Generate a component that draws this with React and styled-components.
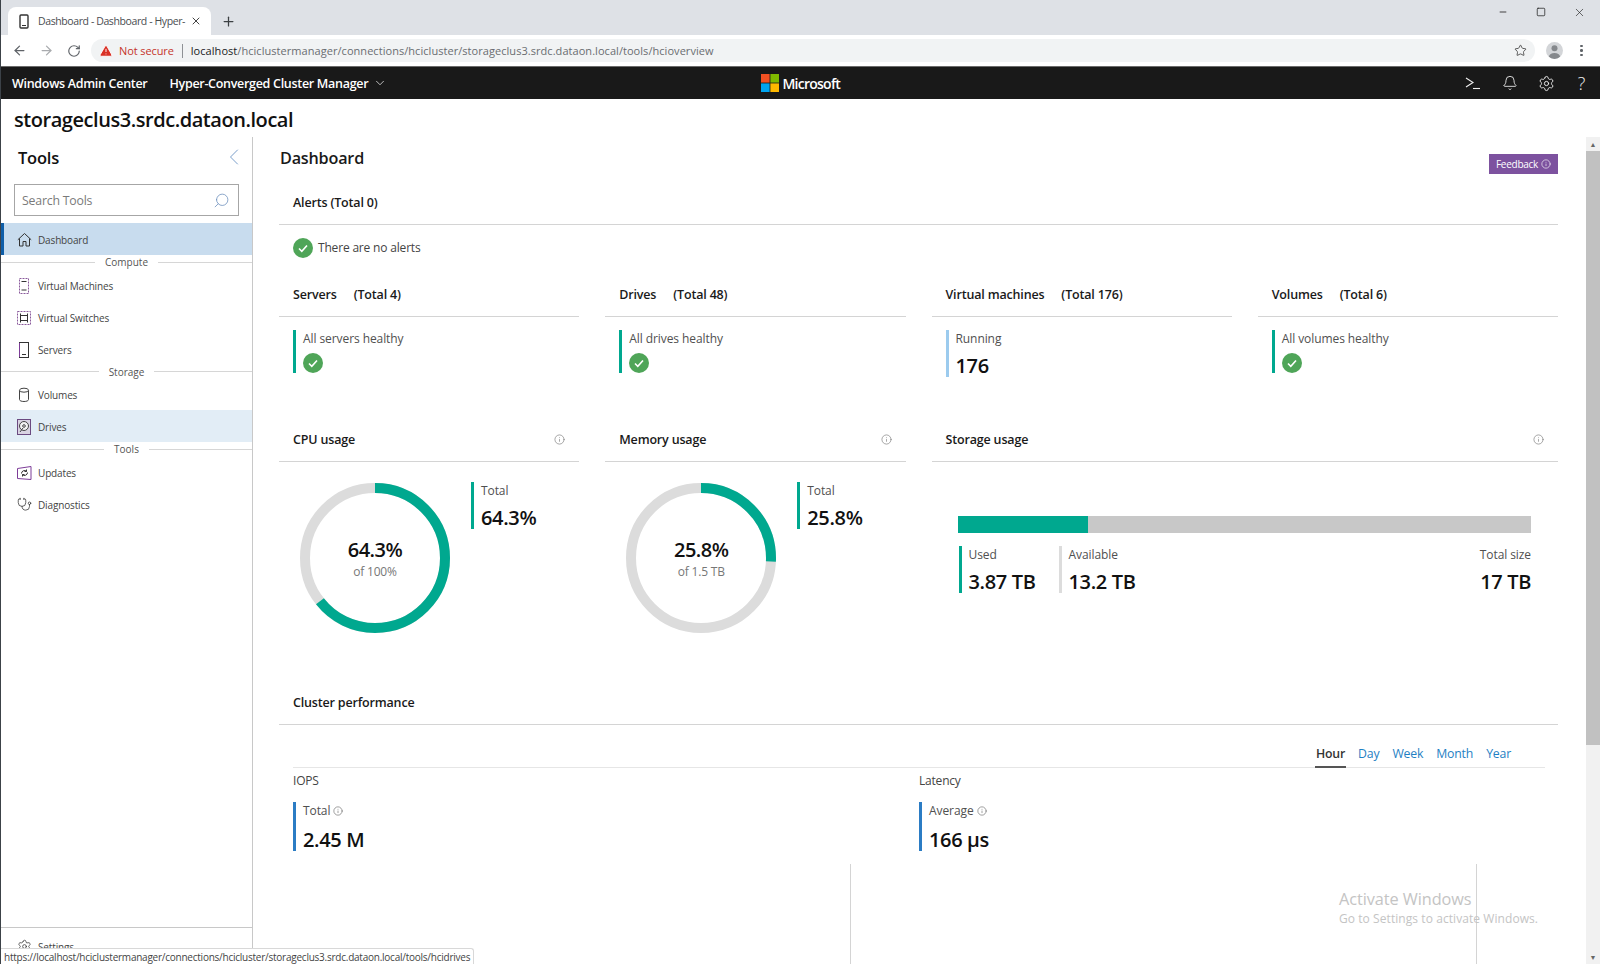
import React from 'react';
import styled, { createGlobalStyle } from 'styled-components';
import {
  ArrowLeft, ArrowRight, RotateCw, Star, Plus, X, Minus, Square, ChevronDown, ChevronLeft,
  Search, Info, Bell, Settings, Stethoscope, TriangleAlert,
} from 'lucide-react';

const Global = createGlobalStyle`
  html, body { margin: 0; padding: 0; height: 964px; overflow: hidden; background: #fff; }
  body { font-family: "Open Sans", "Noto Sans", "Liberation Sans", sans-serif; color: #1a1a1a; }
  * { box-sizing: border-box; }
`;

const Page = styled.div`
  position: relative;
  width: 1600px;
  height: 964px;
  display: flex;
  flex-direction: column;
  overflow: hidden;
  border-left: 1px solid #3c4248;
`;

/* browser chrome */
const TabStrip = styled.div`
  height: 35px;
  flex: none;
  background: #dee1e6;
  display: flex;
  align-items: flex-end;
  padding-left: 7px;
`;
const Tab = styled.div`
  width: 203px;
  height: 28px;
  background: #fff;
  border-radius: 8px 8px 0 0;
  display: flex;
  align-items: center;
  padding-left: 11px;
  font-size: 10.5px;
  letter-spacing: -0.4px;
  color: #4a4d51;
  svg { flex: none; }
`;
const TabTitle = styled.span`
  margin-left: 9px;
  width: 152px;
  white-space: nowrap;
`;
const NewTab = styled.div`
  height: 28px;
  margin-left: 10px;
  display: flex;
  align-items: center;
  color: #3c4043;
`;
const WindowControls = styled.div`
  margin-left: auto;
  height: 35px;
  display: flex;
  align-items: flex-start;
  padding: 5px 2px 0 0;
  color: #222;
`;
const WindowButton = styled.div`
  width: 38px;
  height: 14px;
  display: flex;
  justify-content: center;
  align-items: center;
`;
const Toolbar = styled.div`
  height: 31px;
  flex: none;
  background: #fff;
  display: flex;
  align-items: center;
  padding-left: 5px;
  color: #5f6368;
`;
const NavButton = styled.div`
  width: 27px;
  display: flex;
  justify-content: center;
  color: ${p => (p.$off ? '#a9abae' : '#5f6368')};
`;
const Omnibox = styled.div`
  margin-left: 4px;
  width: 1444px;
  height: 23px;
  background: #f1f3f4;
  border-radius: 12px;
  display: flex;
  align-items: center;
  padding: 0 8px 0 8px;
  font-size: 11px;
  letter-spacing: 0.05px;
  white-space: nowrap;
`;
const NotSecure = styled.span`
  color: #c5352b;
  margin-left: 6px;
  letter-spacing: -0.1px;
`;
const OmniSep = styled.span`
  width: 1px;
  height: 14px;
  background: #8e9195;
  margin: 0 8px 0 8px;
`;
const UrlHost = styled.span`color: #202124;`;
const UrlRest = styled.span`color: #6a6d71;`;
const Bookmark = styled.span`
  margin-left: auto;
  display: flex;
  color: #444;
`;
const Avatar = styled.div`
  margin-left: 11px;
  width: 17px;
  height: 17px;
  border-radius: 50%;
  background: #d3d5d8;
  color: #85888c;
  overflow: hidden;
  display: flex;
  justify-content: center;
`;
const DotsMenu = styled.div`
  margin-left: 17px;
  display: flex;
  flex-direction: column;
  gap: 2px;
  span { width: 2.5px; height: 2.5px; border-radius: 50%; background: #5f6368; }
`;

/* app bar */
const AppBar = styled.div`
  height: 33px;
  flex: none;
  background: #191919;
  border-top: 1px solid #6b6b6b;
  color: #fff;
  display: flex;
  align-items: center;
  padding-left: 11px;
  font-size: 12.5px;
  letter-spacing: -0.3px;
`;
const AppName = styled.div`
  font-weight: 600;
`;
const Solution = styled.div`
  margin-left: 22px;
  font-weight: 600;
  display: flex;
  align-items: center;
  gap: 5px;
  width: 592px;
`;
const Brand = styled.div`
  display: flex;
  align-items: center;
  gap: 3px;
  font-size: 14px;
  font-weight: 600;
  letter-spacing: -0.75px;
`;
const BarIcons = styled.div`
  margin-left: auto;
  padding-right: 2px;
  display: flex;
  align-items: center;
  color: #f0f0f0;
`;
const BarIcon = styled.div`
  width: ${p => p.$w || 37}px;
  display: flex;
  justify-content: center;
`;
const Help = styled.span`
  font-size: 18px;
  font-weight: 300;
  line-height: 18px;
`;

const ServerTitle = styled.div`
  height: 38px;
  flex: none;
  padding: 3px 0 0 13px;
  display: flex;
  align-items: center;
  font-size: 20px;
  font-weight: 600;
  letter-spacing: -0.45px;
  color: #111;
`;

const Body = styled.div`
  flex: 1;
  min-height: 0;
  display: flex;
`;

/* sidebar */
const Sidebar = styled.div`
  width: 252px;
  flex: none;
  border-right: 1px solid #c8c8c8;
  display: flex;
  flex-direction: column;
`;
const SideHead = styled.div`
  height: 47px;
  flex: none;
  display: flex;
  align-items: center;
  justify-content: space-between;
  padding: 0 4px 7px 17px;
  font-size: 16.5px;
  font-weight: 600;
  letter-spacing: -0.2px;
  color: #7097c6;
  span { color: #111; }
`;
const SearchBox = styled.div`
  margin-left: 13px;
  width: 225px;
  height: 32px;
  flex: none;
  border: 1px solid #a6a6a6;
  display: flex;
  align-items: center;
  justify-content: space-between;
  padding: 0 8px 0 7px;
  font-size: 12.3px;
  color: #7a7a7a;
  letter-spacing: -0.2px;
  svg { transform: scaleX(-1); color: #6c8fbc; }
`;
const Nav = styled.div`
  margin-top: 7px;
  flex: 1;
`;
const NavRow = styled.div`
  height: 32px;
  display: flex;
  align-items: center;
  padding: 1px 0 0 ${p => (p.$active ? '12px' : '15px')};
  gap: 6px;
  font-size: 10px;
  letter-spacing: -0.15px;
  color: #444;
  background: ${p => (p.$active ? '#c8dcee' : p.$hover ? '#e2edf6' : 'transparent')};
  border-left: ${p => (p.$active ? '3px solid #0f5ea8' : 'none')};
`;
const NavIcon = styled.span`
  width: 16px;
  height: 18px;
  flex: none;
  display: flex;
  align-items: center;
  justify-content: center;
  color: #333;
`;
const NavGroup = styled.div`
  height: ${p => p.$h || 14}px;
  display: flex;
  align-items: center;
  gap: 10px;
  font-size: 10px;
  color: #555;
  &::before, &::after {
    content: '';
    flex: 1;
    height: 1px;
    background: #d6d6d6;
  }
`;
const SideFoot = styled(NavRow)`
  height: 37px;
  flex: none;
  border-top: 1px solid #c8c8c8;
`;

/* content */
const Content = styled.div`
  flex: 1;
  min-width: 0;
  padding: 0 28px 0 26px;
  overflow: hidden;
`;
const TitleRow = styled.div`
  height: 45px;
  display: flex;
  justify-content: space-between;
  align-items: flex-start;
  padding: 10px 0 0 1px;
`;
const PageTitle = styled.div`
  font-size: 16.2px;
  line-height: 22px;
  font-weight: 600;
  letter-spacing: -0.2px;
`;
const Feedback = styled.div`
  width: 69px;
  height: 20px;
  margin-top: 7px;
  background: #7d529f;
  color: #fff;
  font-size: 10px;
  letter-spacing: -0.25px;
  display: flex;
  align-items: center;
  justify-content: center;
  gap: 3px;
`;
const SectionHeader = styled.div`
  height: 43px;
  padding: 0 14px 2px 14px;
  border-bottom: 1px solid #d4d4d4;
  display: flex;
  align-items: center;
  justify-content: space-between;
  font-size: 12.5px;
  font-weight: 600;
  letter-spacing: -0.17px;
  color: #1a1a1a;
  svg { color: #777; }
`;
const HeaderText = styled.div`
  display: flex;
  gap: 17px;
`;
const AlertRow = styled.div`
  height: 49px;
  padding: 13px 0 0 14px;
  display: flex;
  align-items: flex-start;
  gap: 5px;
  font-size: 12px;
  line-height: 20px;
  letter-spacing: -0.18px;
  color: #444;
`;
const StatGrid = styled.div`
  display: grid;
  grid-template-columns: repeat(4, 1fr);
  column-gap: 26px;
  height: ${p => p.$h}px;
`;
const Wide = styled.div`
  grid-column: span 2;
`;
const Indent = styled.div`
  padding: 13px 0 0 14px;
`;
const Stat = styled.div`
  display: flex;
  width: fit-content;
  flex-direction: column;
  align-items: flex-start;
  border-left: 3px solid ${p => p.$color || '#00a88f'};
  padding-left: 7px;
  height: ${p => p.$h || 47}px;
`;
const StatLabel = styled.div`
  font-size: 12px;
  line-height: 18px;
  letter-spacing: -0.08px;
  color: #505050;
  display: flex;
  align-items: center;
  gap: 3px;
`;
const StatValue = styled.div`
  font-size: 20px;
  line-height: 24px;
  margin-top: 6px;
  font-weight: 600;
  letter-spacing: -0.35px;
  color: #111;
`;
const PerfValue = styled(StatValue)`
  margin-top: 8px;
`;
const OkDot = styled.div`
  width: 20px;
  height: 20px;
  flex: none;
  border-radius: 50%;
  background: #4fa558;
  color: #fff;
  display: flex;
  align-items: center;
  justify-content: center;
`;
const StatOk = styled(OkDot)`
  margin-top: 5px;
`;
const DonutCell = styled.div`
  display: flex;
  align-items: flex-start;
  padding: 20px 0 0 21px;
  gap: 21px;
`;
const DonutWrap = styled.div`
  position: relative;
  width: 150px;
  height: 150px;
  flex: none;
  margin-top: 1px;
`;
const DonutText = styled.div`
  position: absolute;
  inset: 0;
  display: flex;
  flex-direction: column;
  align-items: center;
  justify-content: center;
  padding-top: 1px;
`;
const DonutValue = styled.div`
  font-size: 20px;
  line-height: 27px;
  font-weight: 600;
  letter-spacing: -0.5px;
  color: #111;
`;
const DonutSub = styled.div`
  font-size: 12px;
  line-height: 18px;
  letter-spacing: -0.2px;
  color: #777;
`;
const StorageBody = styled.div`
  padding: 54px 27px 0;
`;
const Meter = styled.div`
  height: 17px;
  margin-left: -1px;
  background: #c8c8c8;
`;
const MeterFill = styled.div`
  height: 100%;
  background: #00a88f;
`;
const MeterStats = styled.div`
  margin-top: 13px;
  display: flex;
`;
const TotalSize = styled.div`
  margin-left: auto;
  display: flex;
  flex-direction: column;
  align-items: flex-end;
`;
const UsedStat = styled(Stat)`
  width: 100px;
`;
const RangeTabs = styled.div`
  height: 43px;
  margin: 0 13px 0 14px;
  border-bottom: 1px solid #e6e6e6;
  display: flex;
  justify-content: flex-end;
  align-items: flex-end;
  gap: 11px;
  padding-right: 33px;
  font-size: 12.3px;
  letter-spacing: -0.2px;
`;
const RangeTab = styled.div`
  height: 30px;
  padding: 0 1px;
  line-height: 32px;
  color: ${p => (p.$active ? '#333' : '#1f7fc4')};
  font-weight: ${p => (p.$active ? 600 : 400)};
  margin-bottom: -1px;
  border-bottom: 2px solid ${p => (p.$active ? '#555' : 'transparent')};
`;
const PerfGrid = styled.div`
  margin-left: 14px;
  display: grid;
  grid-template-columns: 626px 1fr;
`;
const PerfTitle = styled.div`
  height: 34px;
  font-size: 12px;
  line-height: 25px;
  letter-spacing: -0.2px;
  color: #444;
`;
const ChartBox = styled.div`
  width: 558px;
  height: 110px;
  margin-top: 13px;
  border-right: 1px solid #d4d4d4;
`;
const Scrollbar = styled.div`
  width: 14px;
  flex: none;
  background: #f1f1f1;
  display: flex;
  flex-direction: column;
  align-items: center;
`;
const ScrollArrow = styled.div`
  height: 14px;
  flex: none;
  display: flex;
  align-items: center;
  justify-content: center;
  font-size: 7px;
  color: #666;
`;
const ScrollThumb = styled.div`
  width: 100%;
  height: 594px;
  background: #c1c1c1;
`;
const ScrollGap = styled.div`
  flex: 1;
`;

/* overlays */
const StatusBubble = styled.div`
  position: absolute;
  left: 0;
  bottom: 0;
  width: 473px;
  height: 16px;
  background: #fff;
  border: 1px solid #d8d8d8;
  border-left: none;
  border-bottom: none;
  border-radius: 0 3px 0 0;
  padding-left: 3px;
  font-size: 10px;
  line-height: 16px;
  letter-spacing: -0.24px;
  color: #444;
  white-space: nowrap;
`;
const Activate = styled.div`
  position: absolute;
  left: 1338px;
  top: 888px;
  color: #c4c4c4;
  pointer-events: none;
`;
const ActivateTitle = styled.div`
  font-size: 16.3px;
  line-height: 22px;
  letter-spacing: -0.07px;
`;
const ActivateSub = styled.div`
  font-size: 12px;
  line-height: 16px;
  letter-spacing: 0.07px;
  margin-top: 1px;
`;

const HomeIcon = () => (
  <svg width="15" height="15" viewBox="0 0 15 15" fill="none" stroke="#333" strokeWidth="1">
    <path d="M0.8 7.8L7.5 1.5l6.7 6.3" />
    <path d="M2.5 6.5v7.5h3.5V9.5h3v4.5h3.5V6.5" />
  </svg>
);
const ServerIcon = () => (
  <svg width="14" height="18" viewBox="0 0 14 18" fill="none">
    <rect x="2.5" y="1.5" width="9" height="15" stroke="#333" />
    <path d="M2.5 2v14" stroke="#7d3c98" />
    <path d="M5 13.5h4" stroke="#333" />
  </svg>
);
const VmIcon = () => (
  <svg width="14" height="18" viewBox="0 0 14 18" fill="none">
    <rect x="2.5" y="1.5" width="9" height="15" stroke="#8a5a9c" strokeDasharray="2 1" />
    <path d="M4.5 4.5h5M4.5 13h5" stroke="#333" />
  </svg>
);
const SwitchIcon = () => (
  <svg width="14" height="14" viewBox="0 0 14 14" fill="none">
    <rect x="0.5" y="0.5" width="13" height="13" stroke="#8a5a9c" strokeDasharray="2 1" />
    <path d="M3 4.5h8M3 9.5h8M3.5 2.5v9M10.5 2.5v9" stroke="#333" />
  </svg>
);
const VolumeIcon = () => (
  <svg width="14" height="16" viewBox="0 0 14 16" fill="none">
    <path d="M2.5 3.5v9c0 1.3 2 2 4.5 2s4.5-.7 4.5-2v-9" stroke="#444" />
    <ellipse cx="7" cy="3.2" rx="4.5" ry="2" stroke="#444" />
  </svg>
);
const DriveIcon = () => (
  <svg width="14" height="16" viewBox="0 0 14 16" fill="none">
    <rect x="0.5" y="0.5" width="13" height="15" stroke="#6b4a80" fill="#d9d3e2" />
    <circle cx="7" cy="7" r="4.5" stroke="#444" fill="#f2f2f2" />
    <circle cx="7" cy="7" r="1.3" stroke="#444" />
    <path d="M3 13l3-4" stroke="#444" />
  </svg>
);
const UpdateIcon = () => (
  <svg width="15" height="14" viewBox="0 0 15 14" fill="none">
    <path d="M0.5 2.5l13.5-2v13l-13.5-1z" stroke="#7d3c98" />
    <path d="M4.5 7.5a3 3 0 0 1 5-2.2M10.5 6.5a3 3 0 0 1-5 2.2" stroke="#333" />
    <path d="M9.5 3.5v2h-2M5.5 10.5v-2h2" stroke="#333" />
  </svg>
);
const PromptIcon = () => (
  <svg width="16" height="14" viewBox="0 0 16 14" fill="none" stroke="#f0f0f0" strokeWidth="1.1">
    <path d="M1 2l7 4.5L1 11" />
    <path d="M8 12.5h7" />
  </svg>
);
const FavIcon = () => (
  <svg width="10" height="15" viewBox="0 0 10 15" fill="none">
    <rect x="1" y="1" width="8" height="13" rx="1" stroke="#333" strokeWidth="1.4" />
    <path d="M3 11.5h4" stroke="#333" />
  </svg>
);
const Logo = () => (
  <svg width="18" height="18" viewBox="0 0 18 18">
    <rect width="8.6" height="8.6" fill="#f25022" />
    <rect x="9.4" width="8.6" height="8.6" fill="#7fba00" />
    <rect y="9.4" width="8.6" height="8.6" fill="#00a4ef" />
    <rect x="9.4" y="9.4" width="8.6" height="8.6" fill="#ffb900" />
  </svg>
);
const PersonIcon = () => (
  <svg width="17" height="17" viewBox="0 0 17 17" fill="currentColor">
    <circle cx="8.5" cy="6.2" r="3" />
    <ellipse cx="8.5" cy="14.5" rx="5.5" ry="3.6" />
  </svg>
);
const Check = () => (
  <svg width="12" height="12" viewBox="0 0 12 12" fill="none" stroke="currentColor" strokeWidth="1.6">
    <path d="M2 6.5l2.8 2.8L10 3.5" />
  </svg>
);
const InfoIcon = () => <Info size={11} strokeWidth={1.4} />;

const Donut = ({ pct, value, sub }) => {
  const r = 70;
  const c = 2 * Math.PI * r;
  return (
    <DonutWrap>
      <svg width="150" height="150" viewBox="0 0 150 150">
        <circle cx="75" cy="75" r={r} fill="none" stroke="#dcdcdc" strokeWidth="10" />
        <circle
          cx="75" cy="75" r={r} fill="none" stroke="#00a88f" strokeWidth="10"
          strokeDasharray={`${(c * pct) / 100} ${c}`}
          transform="rotate(-90 75 75)"
        />
      </svg>
      <DonutText>
        <DonutValue>{value}</DonutValue>
        <DonutSub>{sub}</DonutSub>
      </DonutText>
    </DonutWrap>
  );
};

const health = [
  { name: 'Servers', total: 'Total 4', text: 'All servers healthy' },
  { name: 'Drives', total: 'Total 48', text: 'All drives healthy' },
  { name: 'Virtual machines', total: 'Total 176', running: '176' },
  { name: 'Volumes', total: 'Total 6', text: 'All volumes healthy' },
];

export default function App() {
  return (
    <Page>
      <Global />
      <TabStrip>
        <Tab>
          <FavIcon />
          <TabTitle>Dashboard - Dashboard - Hyper-</TabTitle>
          <X size={12} color="#444" />
        </Tab>
        <NewTab><Plus size={15} strokeWidth={2} /></NewTab>
        <WindowControls>
          <WindowButton><Minus size={10} /></WindowButton>
          <WindowButton><Square size={10} strokeWidth={1.8} /></WindowButton>
          <WindowButton><X size={13} strokeWidth={1.2} /></WindowButton>
        </WindowControls>
      </TabStrip>
      <Toolbar>
        <NavButton><ArrowLeft size={15} strokeWidth={2} /></NavButton>
        <NavButton $off><ArrowRight size={15} strokeWidth={2} /></NavButton>
        <NavButton><RotateCw size={14} strokeWidth={2} /></NavButton>
        <Omnibox>
          <TriangleAlert size={14} fill="#d93025" color="#fff" strokeWidth={1.6} />
          <NotSecure>Not secure</NotSecure>
          <OmniSep />
          <UrlHost>localhost</UrlHost>
          <UrlRest>/hciclustermanager/connections/hcicluster/storageclus3.srdc.dataon.local/tools/hcioverview</UrlRest>
          <Bookmark><Star size={13} strokeWidth={1.6} /></Bookmark>
        </Omnibox>
        <Avatar><PersonIcon /></Avatar>
        <DotsMenu><span /><span /><span /></DotsMenu>
      </Toolbar>
      <AppBar>
        <AppName>Windows Admin Center</AppName>
        <Solution>
          Hyper-Converged Cluster Manager
          <ChevronDown size={14} strokeWidth={1.2} />
        </Solution>
        <Brand><Logo />Microsoft</Brand>
        <BarIcons>
          <BarIcon><PromptIcon /></BarIcon>
          <BarIcon><Bell size={16} strokeWidth={1.3} /></BarIcon>
          <BarIcon><Settings size={17} strokeWidth={1.3} /></BarIcon>
          <BarIcon $w={33}><Help>?</Help></BarIcon>
        </BarIcons>
      </AppBar>
      <ServerTitle>storageclus3.srdc.dataon.local</ServerTitle>
      <Body>
        <Sidebar>
          <SideHead>
            <span>Tools</span>
            <ChevronLeft size={28} strokeWidth={0.8} />
          </SideHead>
          <SearchBox>
            Search Tools
            <Search size={17} strokeWidth={1.1} />
          </SearchBox>
          <Nav>
            <NavRow $active><NavIcon><HomeIcon /></NavIcon>Dashboard</NavRow>
            <NavGroup $h={14}>Compute</NavGroup>
            <NavRow><NavIcon><VmIcon /></NavIcon>Virtual Machines</NavRow>
            <NavRow><NavIcon><SwitchIcon /></NavIcon>Virtual Switches</NavRow>
            <NavRow><NavIcon><ServerIcon /></NavIcon>Servers</NavRow>
            <NavGroup $h={13}>Storage</NavGroup>
            <NavRow><NavIcon><VolumeIcon /></NavIcon>Volumes</NavRow>
            <NavRow $hover><NavIcon><DriveIcon /></NavIcon>Drives</NavRow>
            <NavGroup $h={14}>Tools</NavGroup>
            <NavRow><NavIcon><UpdateIcon /></NavIcon>Updates</NavRow>
            <NavRow><NavIcon><Stethoscope size={15} strokeWidth={1.2} /></NavIcon>Diagnostics</NavRow>
          </Nav>
          <SideFoot><NavIcon><Settings size={15} strokeWidth={1.2} /></NavIcon>Settings</SideFoot>
        </Sidebar>
        <Content>
          <TitleRow>
            <PageTitle>Dashboard</PageTitle>
            <Feedback>Feedback <Info size={10} strokeWidth={1.5} /></Feedback>
          </TitleRow>
          <SectionHeader>Alerts (Total 0)</SectionHeader>
          <AlertRow><OkDot><Check /></OkDot>There are no alerts</AlertRow>
          <StatGrid $h={145}>
            {health.map(h => (
              <div key={h.name}>
                <SectionHeader>
                  <HeaderText><span>{h.name}</span><span>({h.total})</span></HeaderText>
                </SectionHeader>
                <Indent>
                  {h.running ? (
                    <Stat $color="#9ccbee">
                      <StatLabel>Running</StatLabel>
                      <StatValue>{h.running}</StatValue>
                    </Stat>
                  ) : (
                    <Stat $h={43}>
                      <StatLabel>{h.text}</StatLabel>
                      <StatOk><Check /></StatOk>
                    </Stat>
                  )}
                </Indent>
              </div>
            ))}
          </StatGrid>
          <StatGrid $h={263}>
            <div>
              <SectionHeader>CPU usage<InfoIcon /></SectionHeader>
              <DonutCell>
                <Donut pct={64.3} value="64.3%" sub="of 100%" />
                <Stat>
                  <StatLabel>Total</StatLabel>
                  <StatValue>64.3%</StatValue>
                </Stat>
              </DonutCell>
            </div>
            <div>
              <SectionHeader>Memory usage<InfoIcon /></SectionHeader>
              <DonutCell>
                <Donut pct={25.8} value="25.8%" sub="of 1.5 TB" />
                <Stat>
                  <StatLabel>Total</StatLabel>
                  <StatValue>25.8%</StatValue>
                </Stat>
              </DonutCell>
            </div>
            <Wide>
              <SectionHeader>Storage usage<InfoIcon /></SectionHeader>
              <StorageBody>
                <Meter><MeterFill style={{ width: `${(3.87 / 17) * 100}%` }} /></Meter>
                <MeterStats>
                  <UsedStat>
                    <StatLabel>Used</StatLabel>
                    <StatValue>3.87 TB</StatValue>
                  </UsedStat>
                  <Stat $color="#dcdcdc">
                    <StatLabel>Available</StatLabel>
                    <StatValue>13.2 TB</StatValue>
                  </Stat>
                  <TotalSize>
                    <StatLabel>Total size</StatLabel>
                    <StatValue>17 TB</StatValue>
                  </TotalSize>
                </MeterStats>
              </StorageBody>
            </Wide>
          </StatGrid>
          <SectionHeader>Cluster performance</SectionHeader>
          <RangeTabs>
            <RangeTab $active>Hour</RangeTab>
            <RangeTab>Day</RangeTab>
            <RangeTab>Week</RangeTab>
            <RangeTab>Month</RangeTab>
            <RangeTab>Year</RangeTab>
          </RangeTabs>
          <PerfGrid>
            <div>
              <PerfTitle>IOPS</PerfTitle>
              <Stat $color="#2b7cc4" $h={49}>
                <StatLabel>Total <Info size={10} strokeWidth={1.3} /></StatLabel>
                <PerfValue>2.45 M</PerfValue>
              </Stat>
              <ChartBox />
            </div>
            <div>
              <PerfTitle>Latency</PerfTitle>
              <Stat $color="#2b7cc4" $h={49}>
                <StatLabel>Average <Info size={10} strokeWidth={1.3} /></StatLabel>
                <PerfValue>166 µs</PerfValue>
              </Stat>
              <ChartBox />
            </div>
          </PerfGrid>
        </Content>
        <Scrollbar>
          <ScrollArrow>▲</ScrollArrow>
          <ScrollThumb />
          <ScrollGap />
          <ScrollArrow>▼</ScrollArrow>
        </Scrollbar>
      </Body>
      <Activate>
        <ActivateTitle>Activate Windows</ActivateTitle>
        <ActivateSub>Go to Settings to activate Windows.</ActivateSub>
      </Activate>
      <StatusBubble>https://localhost/hciclustermanager/connections/hcicluster/storageclus3.srdc.dataon.local/tools/hcidrives</StatusBubble>
    </Page>
  );
}
